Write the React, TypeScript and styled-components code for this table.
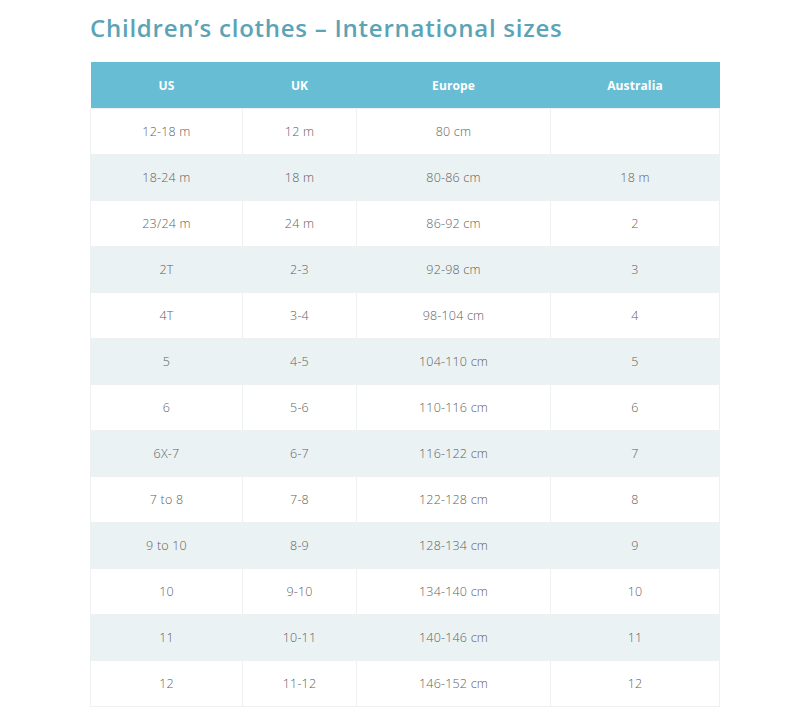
import styled, { createGlobalStyle } from 'styled-components';

const GlobalStyle = createGlobalStyle`
  body {
    margin: 0;
    background: #fff;
    font-family: 'Open Sans', sans-serif;
  }
`;

const Page = styled.div`
  padding: 12px 0 0 90px;
  width: 629px;
`;

const Title = styled.h2`
  margin: 0 0 18px 0;
  color: #5ba3b6;
  font-family: 'Open Sans', sans-serif;
  font-weight: 600;
  font-size: 24px;
  line-height: 32px;
  letter-spacing: 0.75px;
`;

const Table = styled.table`
  width: 629px;
  border-collapse: collapse;
  table-layout: fixed;
  font-family: 'Open Sans', sans-serif;
`;

const HeadCell = styled.th`
  background: #67bdd3;
  color: #fff;
  font-weight: 700;
  font-size: 12px;
  height: 46px;
  padding: 0;
  text-align: center;
  letter-spacing: 0.1px;
`;

const Row = styled.tr<{ $striped?: boolean }>`
  background: ${(p) => (p.$striped ? '#ebf2f4' : '#fff')};
`;

const Cell = styled.td`
  height: 45px;
  padding: 0;
  text-align: center;
  color: #5f5f5f;
  font-size: 12.5px;
  font-weight: 300;
  letter-spacing: 0.2px;
  border: 1px solid #eef1f2;
`;

const columns = [
  { label: 'US', width: 152 },
  { label: 'UK', width: 114 },
  { label: 'Europe', width: 194 },
  { label: 'Australia', width: 169 },
];

const rows = [
  ['12-18 m', '12 m', '80 cm', ''],
  ['18-24 m', '18 m', '80-86 cm', '18 m'],
  ['23/24 m', '24 m', '86-92 cm', '2'],
  ['2T', '2-3', '92-98 cm', '3'],
  ['4T', '3-4', '98-104 cm', '4'],
  ['5', '4-5', '104-110 cm', '5'],
  ['6', '5-6', '110-116 cm', '6'],
  ['6X-7', '6-7', '116-122 cm', '7'],
  ['7 to 8', '7-8', '122-128 cm', '8'],
  ['9 to 10', '8-9', '128-134 cm', '9'],
  ['10', '9-10', '134-140 cm', '10'],
  ['11', '10-11', '140-146 cm', '11'],
  ['12', '11-12', '146-152 cm', '12'],
];

const App = () => {
  return (
    <>
      <GlobalStyle />
      <Page>
        <Title>Children’s clothes – International sizes</Title>
        <Table>
          <colgroup>
            {columns.map((c) => (
              <col key={c.label} style={{ width: c.width }} />
            ))}
          </colgroup>
          <thead>
            <tr>
              {columns.map((c) => (
                <HeadCell key={c.label}>{c.label}</HeadCell>
              ))}
            </tr>
          </thead>
          <tbody>
            {rows.map((r, i) => (
              <Row key={i} $striped={i % 2 === 1}>
                {r.map((v, j) => (
                  <Cell key={j}>{v}</Cell>
                ))}
              </Row>
            ))}
          </tbody>
        </Table>
      </Page>
    </>
  );
};

export default App;
